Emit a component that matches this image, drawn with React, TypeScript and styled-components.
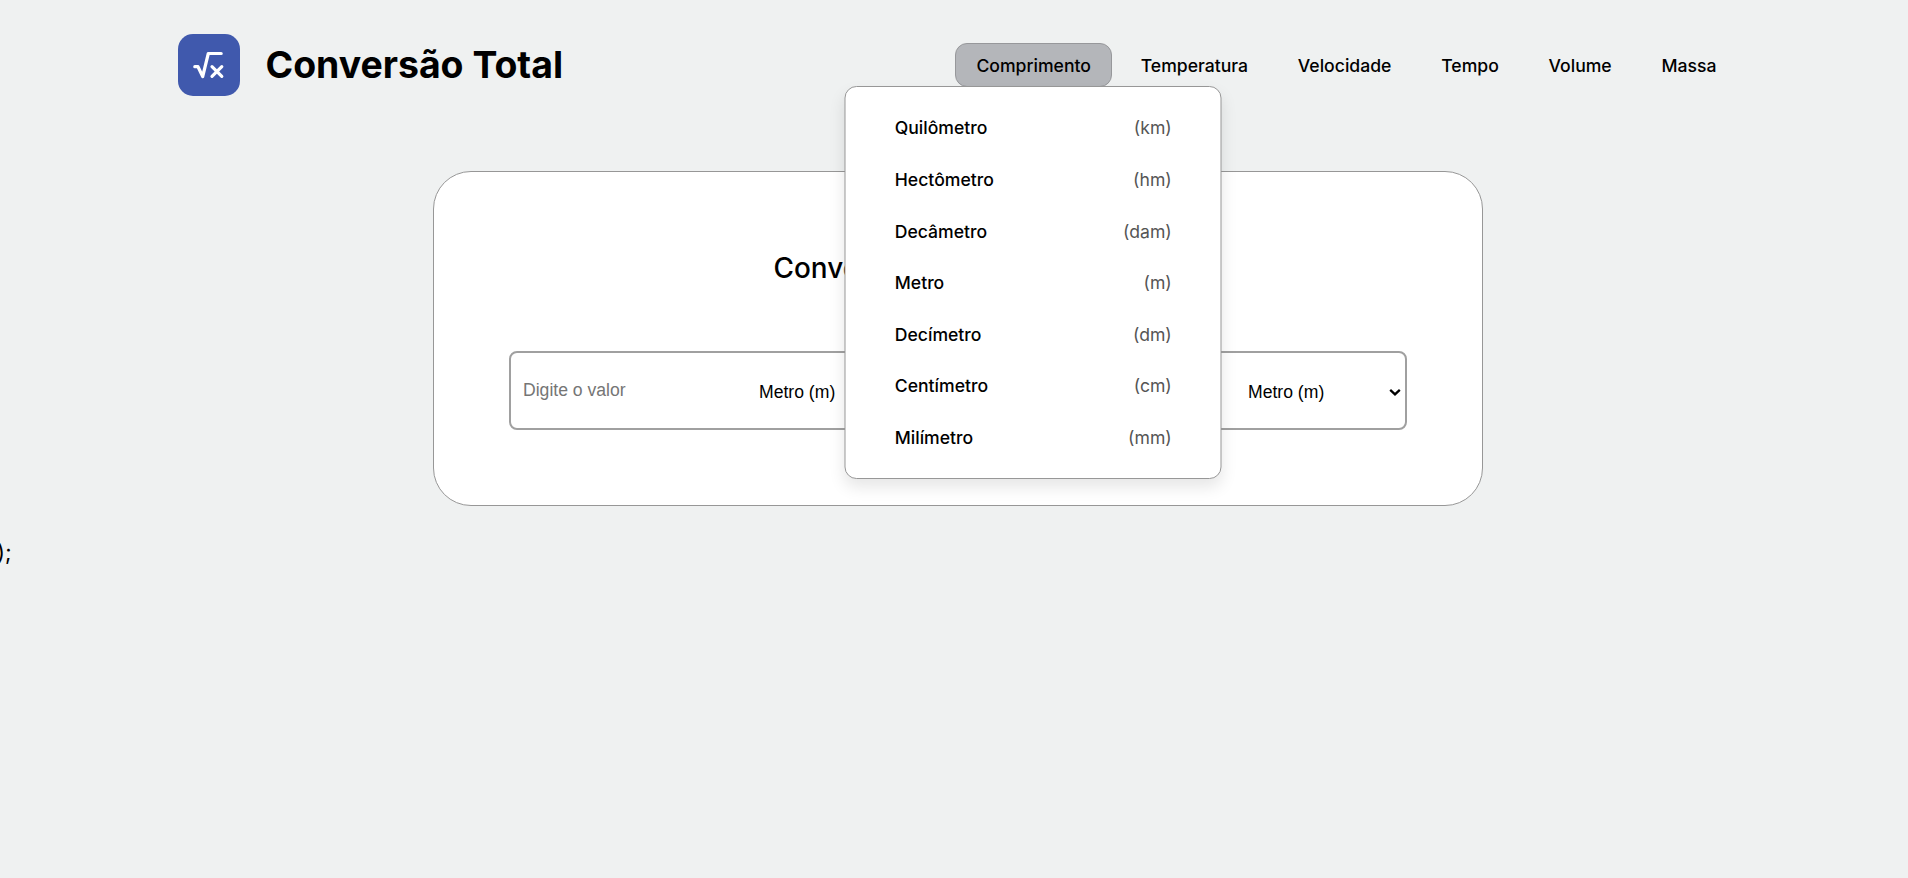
import React from 'react';
import styled, { createGlobalStyle } from 'styled-components';

const GlobalStyle = createGlobalStyle`
  *, *::before, *::after { box-sizing: border-box; }
  body {
    margin: 0;
    background: #eff1f1;
    color: #000;
    font-family: Inter, "Liberation Sans", sans-serif;
    overflow: hidden;
  }
`;

const Header = styled.header`
  display: flex;
  align-items: center;
  justify-content: space-between;
  padding: 34px 170px 0 178px;
`;

const Brand = styled.div`
  display: flex;
  align-items: center;
  gap: 25.5px;
`;

const Logo = styled.div`
  width: 62px;
  height: 62px;
  border-radius: 15px;
  background: #4059ad;

  svg { display: block; }
`;

const Title = styled.h1`
  margin: 0;
  padding-bottom: 1px;
  font-size: 37.4px;
  line-height: 61px;
  font-weight: 700;
  white-space: nowrap;
`;

const Nav = styled.nav`
  display: flex;
  gap: 6.8px;
`;

const NavItem = styled.div`
  position: relative;
`;

const NavButton = styled.button<{ $active?: boolean }>`
  display: block;
  height: 44px;
  padding: 0 20.5px;
  border: 1px solid ${(p) => (p.$active ? '#97989b' : 'transparent')};
  border-radius: 12px;
  background: ${(p) => (p.$active ? '#b4b6ba' : 'transparent')};
  color: #000;
  font: 500 17.6px Inter, sans-serif;
`;

const Menu = styled.ul`
  position: absolute;
  z-index: 10;
  top: 43px;
  left: calc(50% - 0.4px);
  width: 377px;
  height: 393px;
  margin: 0;
  padding: 15.2px 49px;
  transform: translateX(-50%);
  border: 1px solid #979797;
  border-radius: 12px;
  background: #fff;
  box-shadow: 0 8px 16px rgba(0, 0, 0, 0.1);
  list-style: none;
`;

const MenuRow = styled.li`
  display: flex;
  align-items: center;
  justify-content: space-between;
  height: 51.6px;
  font-size: 17.6px;
  font-weight: 500;
`;

const Symbol = styled.span`
  color: #555;
  font-weight: 400;
`;

const Card = styled.main`
  width: 1050px;
  height: 335px;
  margin: 75px 0 0 433px;
  padding: 77px 75px 0;
  border: 1px solid #979797;
  border-radius: 38px;
  background: #fff;
`;

const CardTitle = styled.h2`
  margin: 0 0 64px;
  font-size: 27.9px;
  line-height: 38px;
  font-weight: 500;
  text-align: center;
`;

const Fields = styled.div`
  display: flex;
  height: 79px;
  border: 2px solid #a0a0a0;
  border-radius: 8px;
`;

const ValueInput = styled.input`
  width: 233px;
  padding: 0 12px;
  border: 0;
  outline: 0;
  background: transparent;
  font: 17.6px "Liberation Sans", Arial, sans-serif;

  &::placeholder { color: #757575; }
`;

const SelectBox = styled.div`
  display: flex;
  align-items: center;
  width: 172px;
  padding: 2px 4px 0 0;
`;

const UnitSelect = styled.select`
  flex: 1;
  height: 100%;
  padding: 0 0 0 15px;
  appearance: none;
  border: 0;
  outline: 0;
  background: transparent;
  color: #000;
  font: 17.6px "Liberation Sans", Arial, sans-serif;
`;

const Result = styled.output`
  flex: 1;
`;

const Trailing = styled.div`
  margin: 33px 0 0 -3px;
  font-size: 22px;
  line-height: 26px;
`;

const categories = ['Comprimento', 'Temperatura', 'Velocidade', 'Tempo', 'Volume', 'Massa'];

const units = [
  ['Quilômetro', 'km'],
  ['Hectômetro', 'hm'],
  ['Decâmetro', 'dam'],
  ['Metro', 'm'],
  ['Decímetro', 'dm'],
  ['Centímetro', 'cm'],
  ['Milímetro', 'mm'],
];

function UnitPicker() {
  return (
    <SelectBox>
      <UnitSelect defaultValue="m">
        {units.map(([name, symbol]) => (
          <option key={symbol} value={symbol}>{`${name} (${symbol})`}</option>
        ))}
      </UnitSelect>
      <svg width="12" height="8" viewBox="0 0 12 8" fill="none" stroke="#000" strokeWidth="2.3">
        <path d="M1.2 1.8 6 6.4l4.8-4.6" />
      </svg>
    </SelectBox>
  );
}

export default function App() {
  return (
    <>
      <GlobalStyle />
      <Header>
        <Brand>
          <Logo>
            <svg width="62" height="62" viewBox="0 0 62 62" fill="none" stroke="#fff" strokeWidth="3.2" strokeLinecap="round" strokeLinejoin="round">
              <path d="M16.8 32.7h3.2l4.7 9.8 5.6-23H43.2M34 32.6l9.8 9.8M43.8 32.6 34 42.4" />
            </svg>
          </Logo>
          <Title>Conversão Total</Title>
        </Brand>
        <Nav>
          {categories.map((name, i) => (
            <NavItem key={name}>
              <NavButton $active={i === 0}>{name}</NavButton>
              {i === 0 && (
                <Menu>
                  {units.map(([unit, symbol]) => (
                    <MenuRow key={symbol}>
                      {unit}
                      <Symbol>({symbol})</Symbol>
                    </MenuRow>
                  ))}
                </Menu>
              )}
            </NavItem>
          ))}
        </Nav>
      </Header>
      <Card>
        <CardTitle>Conversor de Comprimento</CardTitle>
        <Fields>
          <ValueInput placeholder="Digite o valor" />
          <UnitPicker />
          <Result />
          <UnitPicker />
        </Fields>
      </Card>
      <Trailing>);</Trailing>
    </>
  );
}
